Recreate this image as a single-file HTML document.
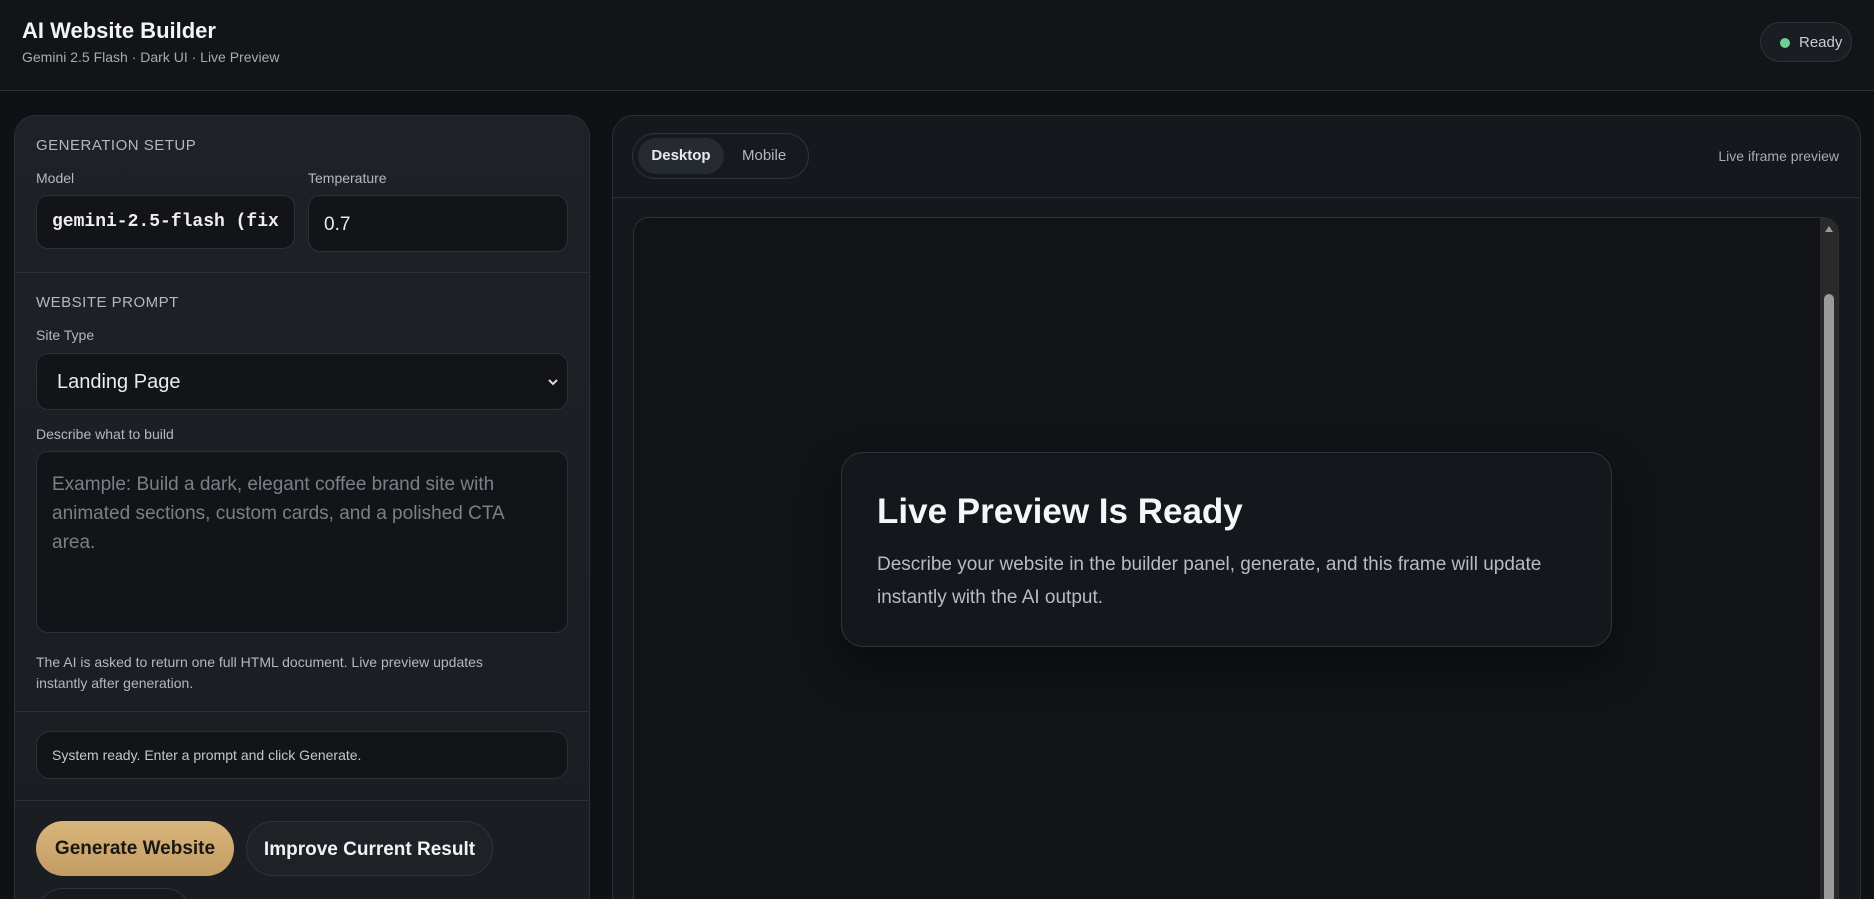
<!DOCTYPE html>
<html><head><meta charset="utf-8"><style>
*{box-sizing:border-box;margin:0;padding:0}
html{width:1874px;height:899px;overflow:hidden}
body{width:1874px;height:899px;overflow:hidden;background:#0f1114;font-family:"Liberation Sans",sans-serif;color:#e8eaed;position:relative}
.abs{position:absolute}
.hdr{left:0;top:0;width:1874px;height:91px;background:#121417;border-bottom:1px solid #2a2e35}
.t1{left:22px;top:18px;font-size:22px;font-weight:bold;color:#f3f4f6}
.t2{left:22px;top:49px;font-size:14px;color:#a6abb3}
.ready{left:1760px;top:22px;width:92px;height:40px;border:1px solid #2e333b;border-radius:20px;background:#1a1d22;font-size:15px;color:#c9cdd3;padding:11px 0 0 38px}
.ready:before{content:"";position:absolute;left:19px;top:15px;width:10px;height:10px;border-radius:50%;background:#6fcf97}
.lp{left:14px;top:115px;width:576px;height:784px;background:linear-gradient(#1e2127,#1a1d22);border:1px solid #2b2f36;border-bottom:none;border-radius:22px 22px 0 0}
.sec{font-size:15px;letter-spacing:.5px;color:#b3b8c0}
.lbl{font-size:14px;color:#b3b8c0}
.inp{background:#121418;border:1px solid #2c3038;border-radius:12px}
.div{height:1px;background:#2b2f36;left:15px;width:574px}
.rp{left:612px;top:115px;width:1249px;height:784px;background:#15181c;border:1px solid #2b2f36;border-bottom:none;border-radius:22px 22px 0 0}
.btn{border-radius:28px;font-size:19px;font-weight:bold;text-align:center;line-height:55px}
</style></head><body>
<div class="abs hdr"></div>
<div class="abs t1">AI Website Builder</div>
<div class="abs t2">Gemini 2.5 Flash · Dark UI · Live Preview</div>
<div class="abs ready">Ready</div>

<div class="abs lp"></div>
<div class="abs sec" style="left:36px;top:137px">GENERATION SETUP</div>
<div class="abs lbl" style="left:36px;top:170px">Model</div>
<div class="abs lbl" style="left:308px;top:170px">Temperature</div>
<div class="abs inp" style="left:36px;top:195px;width:259px;height:54px;overflow:hidden;padding:16px 0 0 15px;font-family:'Liberation Mono',monospace;font-weight:bold;font-size:18px;color:#eee;white-space:nowrap">gemini-2.5-flash (fix</div>
<div class="abs inp" style="left:308px;top:195px;width:260px;height:57px;padding:18px 0 0 15px;font-size:19px">0.7</div>
<div class="abs div" style="top:272px"></div>
<div class="abs sec" style="left:36px;top:294px">WEBSITE PROMPT</div>
<div class="abs lbl" style="left:36px;top:327px">Site Type</div>
<div class="abs inp" style="left:36px;top:353px;width:532px;height:57px;padding:17px 0 0 20px;font-size:20px">Landing Page
<svg class="abs" style="right:8px;top:24px" width="12" height="8" viewBox="0 0 12 8"><path d="M2 2l4 4 4-4" stroke="#ddd" stroke-width="2" fill="none"/></svg></div>
<div class="abs lbl" style="left:36px;top:426px">Describe what to build</div>
<div class="abs inp" style="left:36px;top:451px;width:532px;height:182px;padding:18px 15px;font-size:19px;line-height:29px;color:#7b8088">Example: Build a dark, elegant coffee brand site with animated sections, custom cards, and a polished CTA area.</div>
<div class="abs lbl" style="left:36px;top:652px;width:490px;line-height:21px;font-size:14px">The AI is asked to return one full HTML document. Live preview updates instantly after generation.</div>
<div class="abs div" style="top:711px"></div>
<div class="abs inp" style="left:36px;top:731px;width:532px;height:48px;border-radius:14px;padding:15px 0 0 15px;font-size:14px;color:#c3c8cf">System ready. Enter a prompt and click Generate.</div>
<div class="abs div" style="top:800px"></div>
<div class="abs btn" style="left:36px;top:821px;width:198px;height:55px;background:linear-gradient(#d9b57c,#c29c63);color:#1b1712">Generate Website</div>
<div class="abs btn" style="left:246px;top:821px;width:247px;height:55px;background:#1e2227;border:1px solid #2f343c;color:#f1f2f4">Improve Current Result</div>
<div class="abs btn" style="left:36px;top:888px;width:156px;height:55px;background:#16191d;border:1px solid #2f343c"></div>

<div class="abs rp"></div>
<div class="abs" style="left:632px;top:133px;width:177px;height:46px;border:1px solid #2f343c;border-radius:23px;background:#16191d"></div>
<div class="abs" style="left:638px;top:138px;width:86px;height:36px;border-radius:18px;background:#262a31;font-size:15px;font-weight:bold;text-align:center;line-height:36px">Desktop</div>
<div class="abs" style="left:742px;top:138px;font-size:15px;line-height:36px;color:#b3b8c0">Mobile</div>
<div class="abs" style="left:1600px;top:148px;width:239px;text-align:right;font-size:14px;color:#a6abb3">Live iframe preview</div>
<div class="abs div" style="left:613px;top:197px;width:1247px"></div>
<div class="abs" style="left:633px;top:217px;width:1206px;height:700px;border:1px solid #2c3038;border-radius:16px;background:#111317;overflow:hidden">
<div class="abs" style="right:0;top:0;width:18px;height:700px;background:#2a2a2a"></div>
<div class="abs" style="right:4px;top:76px;width:10px;height:640px;border-radius:5px;background:#9a9a9a"></div>
<div class="abs" style="right:5px;top:8px;width:0;height:0;border-left:4px solid transparent;border-right:4px solid transparent;border-bottom:6px solid #9a9a9a"></div>
</div>
<div class="abs" style="left:841px;top:452px;width:771px;height:195px;border:1px solid #2f343c;border-radius:22px;background:#14171b;box-shadow:0 20px 40px rgba(0,0,0,.4)"></div>
<div class="abs" style="left:877px;top:492px;font-size:35px;font-weight:bold;color:#f4f6f8">Live Preview Is Ready</div>
<div class="abs" style="left:877px;top:548px;width:720px;font-size:19px;line-height:33px;color:#b6bcc4">Describe your website in the builder panel, generate, and this frame will update instantly with the AI output.</div>
</body></html>
